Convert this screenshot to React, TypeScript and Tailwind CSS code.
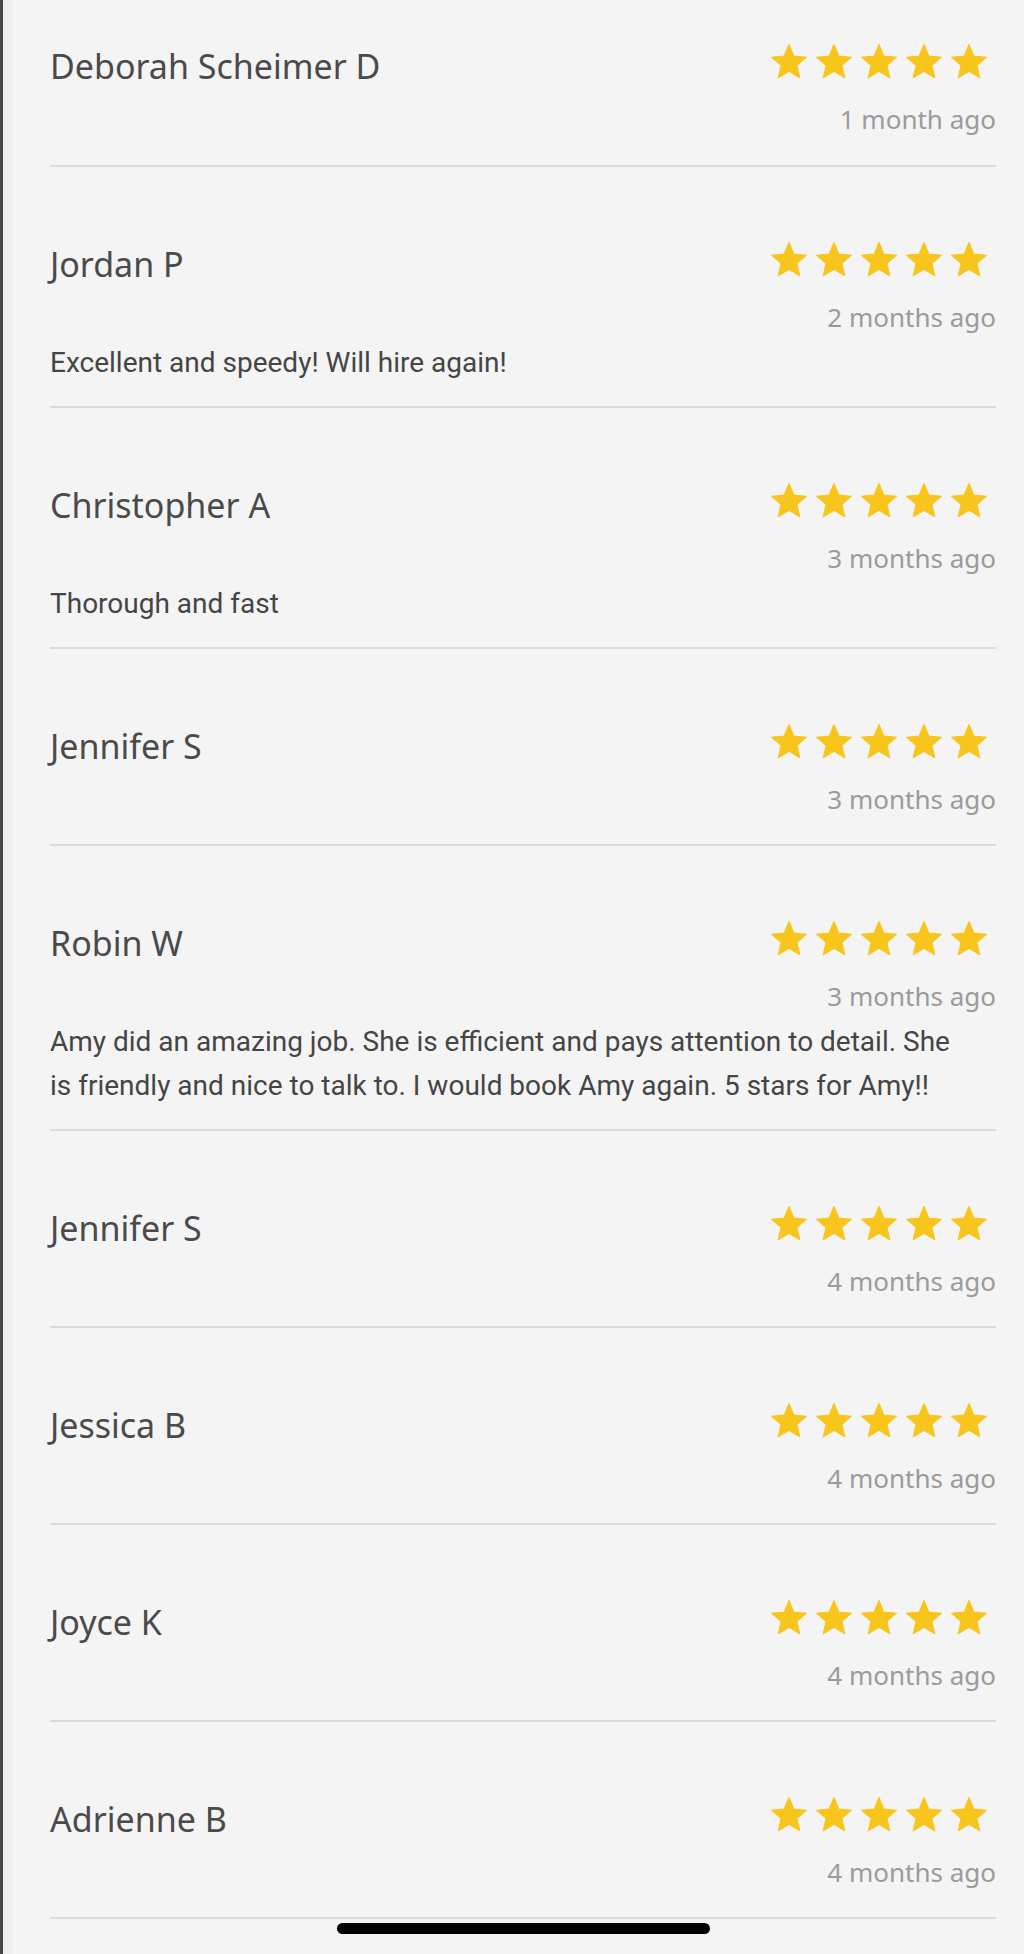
import React from "react";

type Review = { name: string; date: string; text?: React.ReactNode };

const reviews: Review[] = [
  { name: "Deborah Scheimer D", date: "1 month ago" },
  { name: "Jordan P", date: "2 months ago", text: "Excellent and speedy! Will hire again!" },
  { name: "Christopher A", date: "3 months ago", text: "Thorough and fast" },
  { name: "Jennifer S", date: "3 months ago" },
  {
    name: "Robin W",
    date: "3 months ago",
    text: (
      <>
        Amy did an amazing job. She is efficient and pays attention to detail. She
        <br />
        is friendly and nice to talk to. I would book Amy again. 5 stars for Amy!!
      </>
    ),
  },
  { name: "Jennifer S", date: "4 months ago" },
  { name: "Jessica B", date: "4 months ago" },
  { name: "Joyce K", date: "4 months ago" },
  { name: "Adrienne B", date: "4 months ago" },
];

function Star() {
  return (
    <svg width="42" height="42" viewBox="0 0 24 24" className="block">
      <path
        d="M12 17.27L18.18 21l-1.64-7.03L22 9.24l-7.19-.61L12 2 9.19 8.63 2 9.24l5.46 4.73L5.82 21z"
        fill="#f8c51c"
        stroke="#f8c51c"
        strokeWidth="0.6"
        strokeLinejoin="round"
      />
    </svg>
  );
}

function Stars() {
  return (
    <div className="flex gap-[3px] mr-[6px] mb-[9px]">
      <Star />
      <Star />
      <Star />
      <Star />
      <Star />
    </div>
  );
}

function ReviewItem({ r, first }: { r: Review; first: boolean }) {
  return (
    <div className="border-b-2 border-[#dadada]">
      <div className={first ? "pt-[46px]" : "pt-[77px]"}>
        <div className="flex h-[40px] items-center justify-between">
          <div className="text-[34px] leading-[40px] text-[#4a4a4a] font-['Noto_Sans',sans-serif]">
            {r.name}
          </div>
          <Stars />
        </div>
        <div className="mt-[17px] text-right text-[26px] leading-[32px] text-[#9b9b9b] font-['Noto_Sans',sans-serif]">
          {r.date}
        </div>
        {r.text ? (
          <div className="mt-[8px] pb-[21px] text-[28px] leading-[44px] text-[#454545] font-['Roboto',sans-serif] whitespace-nowrap">
            {r.text}
          </div>
        ) : (
          <div className={first ? "pb-[30px]" : "pb-[29px]"} />
        )}
      </div>
    </div>
  );
}

export default function App() {
  return (
    <div className="relative h-[1954px] w-[1024px] overflow-hidden bg-[#f4f4f4]">
      <div className="flex h-full">
        <div className="w-[3px] shrink-0 bg-[#474747]" />
        <div className="w-[10px] shrink-0 bg-[#efefef]" />
        <div className="flex-1 pl-[37px] pr-[28px]">
          {reviews.map((r, i) => (
            <ReviewItem key={i} r={r} first={i === 0} />
          ))}
        </div>
      </div>
      <div className="absolute left-[337px] top-[1923px] h-[11px] w-[373px] rounded-full bg-black" />
    </div>
  );
}
